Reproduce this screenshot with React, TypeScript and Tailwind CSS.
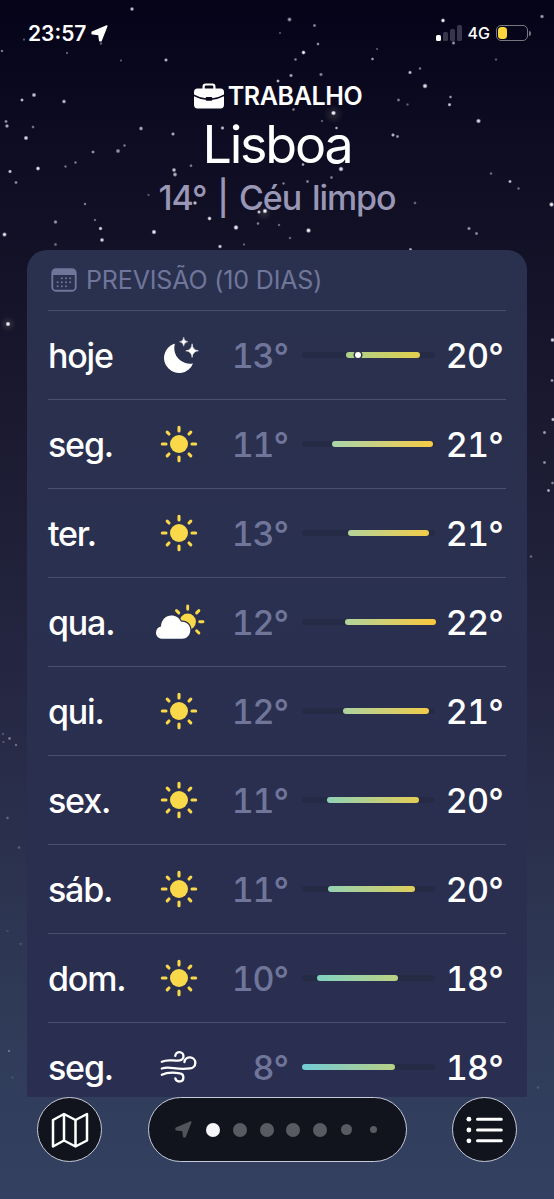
type Weather = "moon" | "sun" | "cloud" | "wind";

interface Day {
  name: string;
  weather: Weather;
  low: number;
  high: number;
  // start and end of the temperature bar, in px of the 133px track
  start: number;
  end: number;
  colors: [string, string];
  now?: number;
}

const days: Day[] = [
  { name: "hoje", weather: "moon", low: 13, high: 20, start: 44, end: 118, colors: ["#abd08c", "#e2cf4c"], now: 56 },
  { name: "seg.", weather: "sun", low: 11, high: 21, start: 30, end: 131, colors: ["#a9d5ac", "#f7cb45"] },
  { name: "ter.", weather: "sun", low: 13, high: 21, start: 46, end: 127, colors: ["#b3d49b", "#f1cb48"] },
  { name: "qua.", weather: "cloud", low: 12, high: 22, start: 43, end: 134, colors: ["#b1d59d", "#fcc83c"] },
  { name: "qui.", weather: "sun", low: 12, high: 21, start: 40.5, end: 126.5, colors: ["#add3a0", "#f0cc49"] },
  { name: "sex.", weather: "sun", low: 11, high: 20, start: 24.5, end: 116.5, colors: ["#8fd2b8", "#e4cd55"] },
  { name: "sáb.", weather: "sun", low: 11, high: 20, start: 26, end: 113, colors: ["#94d2b4", "#dfcf5a"] },
  { name: "dom.", weather: "sun", low: 10, high: 18, start: 15, end: 96, colors: ["#80d0c0", "#bbd284"] },
  { name: "seg.", weather: "wind", low: 8, high: 18, start: 0, end: 93, colors: ["#72cbd6", "#b8d084"] },
];

// x, y, radius, opacity
const stars: [number, number, number, number][] = [
  [132, 9, 1.7, 0.8], [2, 51, 1.3, 0.5], [24, 39.5, 1.2, 0.35], [67, 53, 1.2, 0.4], [101, 43.5, 1.3, 0.4],
  [121, 60.5, 1.1, 0.4], [166, 60, 1.6, 0.75], [34, 95, 1.9, 0.8], [22, 100, 1.5, 0.8], [64, 101.5, 1.8, 0.75],
  [6, 121.5, 1.5, 0.6], [7, 126, 1.7, 0.7], [33, 127, 1.4, 0.45], [26, 138, 1.9, 0.9], [141, 128.5, 1.8, 0.7],
  [173, 134, 1.6, 0.7], [93, 152, 1.5, 0.6], [118, 151, 1.9, 0.6], [124.5, 145.5, 1.3, 0.5], [75.5, 162.5, 1.3, 0.5],
  [65.5, 166.5, 1.3, 0.45], [38, 168.5, 1.8, 0.95], [10, 171.5, 1.6, 0.85], [16, 182.5, 1.5, 0.55], [174, 170, 1.8, 0.8],
  [175, 174.5, 1.9, 0.7], [191, 165.7, 1.4, 0.5], [148.5, 195, 1.2, 0.35], [85, 204, 1.3, 0.5], [55.5, 222, 1.7, 0.6],
  [95, 220, 1.3, 0.4], [100.5, 228.5, 1.7, 0.85], [154, 232, 2, 0.95], [209.5, 218.5, 1.8, 0.9], [236, 227.5, 2.1, 0.95],
  [265, 211, 2, 1], [259, 212, 1.6, 0.8], [258, 223.5, 1.4, 0.5], [4.5, 234.5, 1.9, 0.9], [102, 240, 1.8, 0.9],
  [55.5, 244.5, 1.5, 0.4], [220, 246.5, 1.7, 0.85], [244, 244.5, 1.2, 0.4], [8, 324, 2, 1], [195, 203, 1.7, 0.8],
  [222.5, 128, 1.6, 0.8], [289.5, 19.5, 1.9, 0.6], [314.5, 25.5, 1.5, 0.55], [280, 33, 1.1, 0.35], [443, 20.5, 1.8, 1],
  [542, 16.5, 1.7, 0.65], [318, 44, 1.4, 0.6], [303.5, 52.5, 1.8, 0.95], [295.5, 59.5, 1.4, 0.5], [377, 49, 1.1, 0.35],
  [372.5, 59, 1.4, 0.65], [453.5, 43, 1.6, 0.6], [496, 59.5, 1.3, 0.35], [410, 72.5, 1.6, 0.8], [420, 68.5, 1.3, 0.5],
  [425, 86, 2.1, 0.9], [291, 75.5, 1.6, 0.7], [321, 74.5, 1.6, 0.55], [278, 81, 1.5, 0.8], [398.5, 100, 1.5, 0.5],
  [407.5, 104.5, 1.3, 0.35], [450.5, 97, 1.4, 0.6], [449.5, 104.7, 1.6, 0.8], [478.5, 121, 2, 0.85], [333.5, 113, 2, 1],
  [322, 121, 1.2, 0.4], [293.5, 109.5, 1.4, 0.5], [336.5, 128, 1.4, 0.7], [393, 135, 1.6, 0.75], [397.5, 136.5, 1.5, 0.6],
  [341, 169, 2.1, 0.9], [303, 164.5, 1.4, 0.7], [331.5, 177.5, 1.4, 0.5], [307.5, 181.5, 1.5, 0.5], [283.5, 183.5, 1.3, 0.5],
  [491, 173.5, 1.3, 0.45], [510, 181.5, 1.5, 0.8], [518.5, 188.5, 1.3, 0.45], [551.5, 204.5, 2, 0.95], [415, 203, 1.4, 0.4],
  [469, 228.5, 1.6, 0.6], [476.5, 233.5, 1.5, 0.55], [308.5, 230.5, 2, 1], [279, 225, 1.3, 0.4], [290, 238, 1.3, 0.4],
  [410.5, 249.5, 1.5, 0.7], [552.5, 340, 1.8, 0.85], [552, 380.5, 1.5, 0.6], [553, 419.5, 1.6, 0.8], [544.5, 432.5, 1.6, 0.6],
  [544.5, 462.5, 1.5, 0.55], [552.5, 483, 1.4, 0.5], [548.5, 490.5, 1.5, 0.7], [531, 556.5, 1.4, 0.35], [3, 734, 1.2, 0.25],
  [9.5, 738.5, 1.4, 0.45], [3.5, 742, 1.2, 0.25], [16, 745, 1.3, 0.35], [7.5, 818, 1.4, 0.3], [19, 847.5, 1.4, 0.25],
  [7.5, 931, 1.3, 0.12], [20.5, 944, 1.4, 0.15], [9, 1051, 1.3, 0.3], [12.5, 1077.5, 1.3, 0.12], [538, 1087.5, 1.4, 0.15],
];

const straightRays = "M0-16.7V-13M0 13V16.7M-16.7 0H-13M13 0H16.7";
const diagonalRays = "M-11.8-11.8L-10-10M11.8-11.8L10-10M-11.8 11.8L-10 10M11.8 11.8L10 10";

function StarField() {
  return (
    <svg className="absolute inset-0 -z-10 h-full w-full" viewBox="0 0 554 1199">
      <defs>
        <radialGradient id="star">
          <stop offset="0" stopColor="#fff" />
          <stop offset="0.4" stopColor="#f1eefa" stopOpacity="0.95" />
          <stop offset="1" stopColor="#d0cce6" stopOpacity="0" />
        </radialGradient>
        <radialGradient id="glow">
          <stop offset="0" stopColor="#8b8172" stopOpacity="0.25" />
          <stop offset="1" stopColor="#8b8172" stopOpacity="0" />
        </radialGradient>
      </defs>
      <circle cx="8" cy="324" r="8" fill="url(#glow)" />
      <circle cx="333.5" cy="114" r="10" fill="url(#glow)" />
      <circle cx="264" cy="213" r="8" fill="url(#glow)" />
      {stars.map(([x, y, r, opacity]) => (
        <circle key={`${x}-${y}`} cx={x} cy={y} r={r * 1.35} opacity={opacity} fill="url(#star)" />
      ))}
    </svg>
  );
}

function LocationArrow({ className }: { className?: string }) {
  return (
    <svg className={className} viewBox="0 0 17 17">
      <path
        d="M1.200 7.200 15.800 1 10 15.600H8.800L7.900 9.400 1.200 8.800Z"
        fill="currentColor"
        stroke="currentColor"
        strokeWidth="1.600"
        strokeLinejoin="round"
      />
    </svg>
  );
}

function WeatherIcon({ weather }: { weather: Weather }) {
  return (
    <svg className="h-11 w-[54px]" viewBox="-27 -22 54 44" fill="none" strokeLinecap="round">
      {weather === "sun" && (
        <>
          <circle r="9" fill="#f9d94a" />
          <path d={straightRays + diagonalRays} stroke="#f9d94a" strokeWidth="3.1" />
        </>
      )}
      {weather === "moon" && (
        <g fill="#fff">
          <path d="M-5-11.200A15 15 0 1 0 14 8.400A15.500 15.500 0 0 1-4.300-10.300Q-4-11.700-5-11.200Z" />
          <path d="M4.700-17.600Q5.100-13.600 8.900-13.200 5.100-12.800 4.700-8.800 4.300-12.800.5-13.200 4.300-13.600 4.700-17.600Z" stroke="#fff" strokeWidth=".4" />
          <path d="M13.100-10.800Q13.600-4.700 19.400-4.200 13.600-3.700 13.100 2.400 12.600-3.700 6.800-4.200 12.600-4.700 13.100-10.800Z" stroke="#fff" strokeWidth=".6" />
        </g>
      )}
      {weather === "cloud" && (
        <>
          <circle cx="8.700" cy="-.2" r="8.200" fill="#f9d94a" />
          <path
            d="M8.700-16V-12.700M20.700-.2H24M17.600-9.100 19.900-11.400M-.2-9.100-2.500-11.400M17.600 8.700 19.900 11"
            stroke="#f9d94a"
            strokeWidth="2.900"
          />
          <path
            d="M-16.600 16.800C-20.500 16.800-23 13.900-23 10.700-23 7.300-20.900 5-18 4.400-17.800-2-13.300-6.500-7.600-6.500-3-6.500.3-4.100 2.100-.2 7.200-.9 11.300 2.900 11.300 8 11.300 13 7.900 16.800 3.100 16.800Z"
            fill="#fff"
            stroke="#2a3050"
            strokeWidth="2.400"
            paintOrder="stroke"
          />
        </>
      )}
      {weather === "wind" && (
        <path
          d="M-17.200-5.200C-11-8.200-6-5.600.8-6.700A4.100 4.100 0 1 0-3.700-11.200M-17.200 1.500C-9-1.400-4 3.300 11 1.400A5.500 5.500 0 1 0 5.400-5M-17.200 7.800C-12 5.200-5 5.200.8 6.300A4.100 4.100 0 1 1-3.700 11.300"
          stroke="#fff"
          strokeWidth="2.300"
        />
      )}
    </svg>
  );
}

function DayRow({ day }: { day: Day }) {
  return (
    <div className="flex h-[89px] shrink-0 items-center border-t border-[#4a4f6c] text-[34px] leading-none">
      <div className="w-[104px] pt-0.5 font-medium tracking-[-1.2px]">{day.name}</div>
      <WeatherIcon weather={day.weather} />
      <div className="w-[83px] pt-0.5 pr-px text-right font-medium tracking-[-1.1px] tabular-nums text-[#70769a]">
        {day.low}°
      </div>
      <div className="relative ml-[13px] h-1.5 w-[133px] rounded-full bg-[#252b45]">
        <div
          className="absolute h-1.5 rounded-full"
          style={{
            left: day.start,
            width: day.end - day.start,
            backgroundImage: `linear-gradient(to right, ${day.colors[0]}, ${day.colors[1]})`,
          }}
        />
        {day.now !== undefined && (
          <div
            className="absolute top-0 size-1.5 -translate-x-1/2 rounded-full bg-white ring-[1.5px] ring-[#2a3050]"
            style={{ left: day.now }}
          />
        )}
      </div>
      <div className="flex-1 pt-0.5 pr-[3px] text-right font-medium tracking-[-0.8px] tabular-nums">{day.high}°</div>
    </div>
  );
}

function StatusBar() {
  return (
    <div className="flex h-[66px] items-center pr-[23px] pl-7">
      <span className="text-[21px] leading-none font-semibold">23:57</span>
      <LocationArrow className="ml-[5px] size-[17px]" />
      <div className="ml-auto flex items-end gap-[2px]">
        <div className="h-1.5 w-[5px] rounded-[1.5px] bg-white" />
        <div className="h-[9px] w-[5px] rounded-[1.5px] bg-[#37364a]" />
        <div className="h-3 w-[5px] rounded-[1.5px] bg-[#37364a]" />
        <div className="h-4 w-[5px] rounded-[1.5px] bg-[#37364a]" />
      </div>
      <span className="ml-[6px] text-base leading-none font-medium">4G</span>
      <div className="ml-1.5 flex h-4 w-8 items-center rounded-[5px] border border-[#77757f] p-px">
        <div className="h-3 w-[9px] rounded-[3.5px] bg-[#fbd73c]" />
      </div>
      <div className="ml-px h-[5px] w-[2px] rounded-r-full bg-[#77757f]" />
    </div>
  );
}

function Header() {
  return (
    <div className="flex h-[184px] flex-col items-center">
      <div className="mt-[17px] ml-[2px] flex h-[26px] items-center gap-1">
        <svg className="h-[26px] w-[30px]" viewBox="0 0 30 26" fill="#fff">
          <path
            d="M8.500 5.500V3.500Q8.500.5 11.500.5H18.500Q21.500.5 21.500 3.500V5.500H26.500Q30 5.500 30 9V11.500Q24 14.800 18.400 15.200 18.400 14 17.200 14H12.800Q11.600 14 11.600 15.200 6 14.800 0 11.500V9Q0 5.500 3.500 5.500ZM10.700 5.500H19.300V4Q19.300 2.600 18 2.600H12Q10.700 2.600 10.700 4Z"
            fillRule="evenodd"
          />
          <path d="M0 13.200Q6 16.300 11.600 16.700 11.700 17.700 12.800 17.700H17.200Q18.300 17.700 18.400 16.700 24 16.300 30 13.200V21.800Q30 25.500 26.500 25.500H3.500Q0 25.500 0 21.800Z" />
        </svg>
        <span className="text-[25px] leading-none font-semibold tracking-[-0.4px]">TRABALHO</span>
      </div>
      <h1 className="mt-[10px] text-[52px] leading-[52px] tracking-[-2.2px]">Lisboa</h1>
      <p className="mt-[8px] text-[34px] leading-[38px] font-medium tracking-[-1.1px] [word-spacing:3px] whitespace-nowrap text-[#9997b5]">
        14° | Céu limpo
      </p>
    </div>
  );
}

function Forecast() {
  return (
    <div className="mx-[27px] flex h-[847px] flex-col overflow-hidden rounded-t-[20px] bg-linear-to-b from-[#2a314e] to-[#2a2e50] px-[21px]">
      <div className="flex h-[60px] shrink-0 items-center gap-[9px] pl-[3px] text-[#70769a]">
        <svg className="h-6 w-[26px]" viewBox="0 0 26 24">
          <rect x="1.300" y="1.300" width="23.400" height="21.400" rx="3.500" fill="none" stroke="currentColor" strokeWidth="1.900" />
          <path d="M1 7V4.500Q1 1 4.500 1H21.500Q25 1 25 4.500V7Z" fill="currentColor" />
          <path
            d="M10.800 10.300H10.810M15 10.300H15.010M19.200 10.300H19.210M6.600 14.300H6.610M10.800 14.300H10.810M15 14.300H15.010M19.200 14.300H19.210M6.600 18.300H6.610M10.800 18.300H10.810M15 18.300H15.010"
            stroke="currentColor"
            strokeWidth="2"
            strokeLinecap="round"
          />
        </svg>
        <span className="pt-px text-[25px] leading-none tracking-[-0.15px]">PREVISÃO (10 DIAS)</span>
      </div>
      {days.map((day, index) => (
        <DayRow key={index} day={day} />
      ))}
    </div>
  );
}

function BottomBar() {
  return (
    <div className="flex h-[65px] items-center justify-between px-[37px] text-white">
      <div className="flex size-[65px] items-center justify-center rounded-full border-[1.5px] border-[#c6cad8] bg-[#11141d]">
        <svg className="h-9 w-[38px]" viewBox="0 0 38 36" fill="none" stroke="currentColor" strokeWidth="2.500" strokeLinejoin="round">
          <path d="M2 8 13 2 24.500 8 36 2V28.500L24.500 34.500 13 28.500 2 34.500ZM13 2V28.500M24.500 8V34.500" />
        </svg>
      </div>
      <div className="ml-px flex h-[65px] w-[259px] items-center rounded-full border-[1.5px] border-[#c6cad8] bg-[#11141d] pl-[26px]">
        <LocationArrow className="mr-[14px] size-[17px] text-[#52545c]" />
        <div className="flex items-center gap-[12.8px]">
          <div className="size-3.5 rounded-full bg-[#f5f5fa]" />
          <div className="size-3.5 rounded-full bg-[#595b63]" />
          <div className="size-3.5 rounded-full bg-[#595b63]" />
          <div className="size-3.5 rounded-full bg-[#595b63]" />
          <div className="size-3.5 rounded-full bg-[#595b63]" />
          <div className="ml-[1.5px] size-[11px] rounded-full bg-[#595b63]" />
          <div className="ml-[5px] size-[7px] rounded-full bg-[#595b63]" />
        </div>
      </div>
      <div className="flex size-[65px] items-center justify-center rounded-full border-[1.5px] border-[#c6cad8] bg-[#11141d]">
        <svg className="h-7 w-[37px]" viewBox="0 0 37 28" stroke="currentColor" strokeWidth="3" strokeLinecap="round">
          <path d="M11.500 3.200H35.300M11.500 14H35.300M11.500 24.800H35.300" />
          <g fill="currentColor" stroke="none">
            <circle cx="2.900" cy="3.200" r="2.400" />
            <circle cx="2.900" cy="14" r="2.400" />
            <circle cx="2.900" cy="24.800" r="2.400" />
          </g>
        </svg>
      </div>
    </div>
  );
}

export default function App() {
  return (
    <div className="relative isolate h-[1199px] w-[554px] overflow-hidden bg-[linear-gradient(to_bottom,#040318_0,#0d0c22_140px,#121126_250px,#1b1a31_430px,#242540_650px,#2a304c_830px,#2f3b57_1020px,#334061_1199px)] font-['Inter',sans-serif] text-white">
      <StarField />
      <StatusBar />
      <Header />
      <Forecast />
      <BottomBar />
    </div>
  );
}
